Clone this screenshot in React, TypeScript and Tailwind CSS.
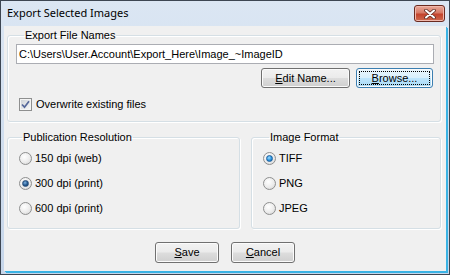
import type { ReactNode } from "react";

const btnBase =
  "h-[20px] rounded-[3px] border text-[11px] leading-none text-black flex items-center justify-center shadow-[inset_0_0_0_1px_#fbfbfb]";
const btnNormal =
  "border-[#707070] bg-[linear-gradient(#f2f2f2_0%,#ebebeb_48%,#dddddd_52%,#cfcfcf_100%)]";
const btnFocus =
  "border-[#3c7fb1] bg-[linear-gradient(#eaf6fd_0%,#d9f0fc_48%,#bee6fd_52%,#a7d9f5_100%)]";

function Radio({ label, checked, bright }: { label: string; checked?: boolean; bright?: boolean }) {
  return (
    <div className="flex items-center h-[13px]">
      <span className="w-[13px] h-[13px] rounded-full border border-[#8e8f8f] bg-[radial-gradient(circle_at_40%_35%,#ffffff_0%,#ececec_55%,#cfcfcf_100%)] flex items-center justify-center">
        {checked && (
          <span
            className={
              bright
                ? "w-[7px] h-[7px] rounded-full border border-[#1d5f9c] bg-[radial-gradient(circle_at_40%_35%,#9fdcff_0%,#2a93de_55%,#0d5fa8_100%)]"
                : "w-[7px] h-[7px] rounded-full border border-[#2a4f7a] bg-[radial-gradient(circle_at_40%_35%,#7fb2e0_0%,#23588f_55%,#123a66_100%)]"
            }
          />
        )}
      </span>
      <span className="ml-[3px] text-[11px]">{label}</span>
    </div>
  );
}

function Group({ title, legendClass, className, children }: { title: string; legendClass: string; className: string; children: ReactNode }) {
  return (
    <fieldset className={"border border-[#d5dfe5] rounded-[3px] shadow-[inset_1px_1px_0_#ffffff,1px_1px_0_#ffffff] " + className}>
      <legend className={"px-[1px] text-[11px] leading-[13px] " + legendClass}>{title}</legend>
      {children}
    </fieldset>
  );
}

export default function App() {
  return (
    <div className="w-[450px] h-[275px] flex flex-col border border-[#3d4652] bg-[linear-gradient(#dbe6f3,#c6d6ea)] font-['Liberation_Sans',Arial,sans-serif] text-black">
      {/* Title bar */}
      <div className="h-[25px] flex items-start shrink-0">
        <span className="self-center pl-[6px] flex-1 text-[11px] font-['Noto_Sans',sans-serif]">Export Selected Images</span>
        <button className="mt-[4px] mr-[4px] w-[31px] h-[17px] rounded-[3px] border border-[#6a2a20] bg-[linear-gradient(#e8a99b_0%,#d77a66_45%,#c3432c_55%,#cf6a4f_100%)] shadow-[inset_0_0_0_1px_#f0b8ac] flex items-center justify-center">
          <svg width="12" height="10" viewBox="0 0 12 10">
            <path d="M2 1.5 L10 8.5 M10 1.5 L2 8.5" stroke="#5a2a22" strokeWidth="3.6" strokeLinecap="round" />
            <path d="M2 1.5 L10 8.5 M10 1.5 L2 8.5" stroke="#ffffff" strokeWidth="2" strokeLinecap="round" />
          </svg>
        </button>
      </div>

      {/* Client area */}
      <div className="flex-1 flex px-[3px] pb-[3px]">
        <div className="flex-1 flex flex-col bg-[#f0f0f0] shadow-[1px_1px_0_#3bb3e4,2px_2px_0_#3bb3e4]">
          <Group title="Export File Names" legendClass="ml-[8px]" className="mt-[3px] ml-[3px] mr-[5px] pl-[8px] pr-[6px] pb-[10px]">
            <div className="mt-[2px] h-[20px] border border-[#abadb3] bg-white flex items-center pl-[2px] text-[11px]">
              C:\Users\User.Account\Export_Here\Image_~ImageID
            </div>
            <div className="mt-[4px] flex justify-end gap-[6px] pr-[1px]">
              <button className={btnBase + " " + btnNormal + " w-[89px]"}>
                <span><span className="underline">E</span>dit Name...</span>
              </button>
              <button className={btnBase + " " + btnFocus + " w-[77px] p-[2px]"}>
                <span className="w-full h-full border border-dotted border-black flex items-center justify-center">
                  <span><span className="underline">B</span>rowse...</span>
                </span>
              </button>
            </div>
            <div className="mt-[10px] ml-[3px] flex items-center h-[13px]">
              <span className="w-[13px] h-[13px] border border-[#8e8f8f] p-[1px] bg-[#f4f4f4]">
                <span className="w-full h-full bg-[linear-gradient(135deg,#cfd3d8,#f6f6f6)] flex items-center justify-center">
                  <svg width="9" height="9" viewBox="0 0 9 9">
                    <path d="M1 4.5 L3.5 7.2 L8 1.2" stroke="#55679a" strokeWidth="1.7" fill="none" />
                  </svg>
                </span>
              </span>
              <span className="ml-[4px] text-[11px]">Overwrite existing files</span>
            </div>
          </Group>

          <div className="mt-[9px] ml-[3px] mr-[5px] flex gap-[11px]">
            <Group title="Publication Resolution" legendClass="ml-[3px]" className="w-[233px] pl-[11px] pb-[13px]">
              <div className="mt-[8px] flex flex-col gap-[12px]">
                <Radio label="150 dpi (web)" />
                <Radio label="300 dpi (print)" checked />
                <Radio label="600 dpi (print)" />
              </div>
            </Group>
            <Group title="Image Format" legendClass="ml-[6px]" className="flex-1 pl-[11px] pb-[13px]">
              <div className="mt-[8px] flex flex-col gap-[12px]">
                <Radio label="TIFF" checked bright />
                <Radio label="PNG" />
                <Radio label="JPEG" />
              </div>
            </Group>
          </div>

          <div className="mt-[13px] flex justify-center gap-[12px]">
            <button className={btnBase + " " + btnNormal + " w-[64px] h-[21px]"}>
              <span><span className="underline">S</span>ave</span>
            </button>
            <button className={btnBase + " " + btnNormal + " w-[64px] h-[21px]"}>
              <span><span className="underline">C</span>ancel</span>
            </button>
          </div>
        </div>
      </div>
    </div>
  );
}
